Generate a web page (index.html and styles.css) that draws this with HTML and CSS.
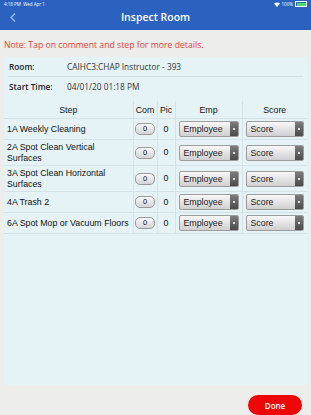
FILE: index.html
```html
<!DOCTYPE html>
<html>
<head>
	<meta charset="utf-8" />
	<title>Inspect Room</title>
	<link rel="stylesheet" href="styles.css">
</head>
<body>
	<div class="topbar">
		<div class="status">
			<span>4:18 PM&nbsp;&nbsp;Wed Apr 1</span>
			<span class="status-right">
				<svg width="6" height="5" viewBox="0 0 6 5"><path d="M0 1.5 Q3 -0.5 6 1.5 L3 5 Z" fill="#fff"/></svg>
				100%
				<span class="battery"><span class="battery-fill"></span></span>
			</span>
		</div>
		<div class="navbar">
			<svg class="back" width="6" height="9" viewBox="0 0 6 9"><path d="M5 0.5 L1 4.5 L5 8.5" stroke="#9fc0ee" stroke-width="1.2" fill="none"/></svg>
			<span class="title">Inspect Room</span>
		</div>
	</div>

	<div class="note">Note: Tap on comment and step for more details.</div>

	<div class="panel">
		<div class="info-row line">
			<span class="info-label">Room:</span>
			<span class="info-value">CAIHC3:CHAP Instructor - 393</span>
		</div>
		<div class="info-row">
			<span class="info-label">Start Time:</span>
			<span class="info-value">04/01/20 01:18 PM</span>
		</div>

		<table class="steps">
			<colgroup>
				<col class="c-step">
				<col class="c-com">
				<col class="c-pic">
				<col class="c-emp">
				<col>
			</colgroup>
			<tr>
				<th>Step</th>
				<th>Com</th>
				<th>Pic</th>
				<th>Emp</th>
				<th>Score</th>
			</tr>
			<tr>
				<td>1A Weekly Cleaning</td>
				<td class="mid"><span class="pill">0</span></td>
				<td class="mid">0</td>
				<td><span class="sel">Employee<i></i></span></td>
				<td><span class="sel">Score<i></i></span></td>
			</tr>
			<tr>
				<td>2A Spot Clean Vertical<br>Surfaces</td>
				<td class="mid"><span class="pill">0</span></td>
				<td class="mid">0</td>
				<td><span class="sel">Employee<i></i></span></td>
				<td><span class="sel">Score<i></i></span></td>
			</tr>
			<tr>
				<td>3A Spot Clean Horizontal<br>Surfaces</td>
				<td class="mid"><span class="pill">0</span></td>
				<td class="mid">0</td>
				<td><span class="sel">Employee<i></i></span></td>
				<td><span class="sel">Score<i></i></span></td>
			</tr>
			<tr>
				<td>4A Trash 2</td>
				<td class="mid"><span class="pill">0</span></td>
				<td class="mid">0</td>
				<td><span class="sel">Employee<i></i></span></td>
				<td><span class="sel">Score<i></i></span></td>
			</tr>
			<tr>
				<td class="nowrap">6A Spot Mop or Vacuum Floors</td>
				<td class="mid"><span class="pill">0</span></td>
				<td class="mid">0</td>
				<td><span class="sel">Employee<i></i></span></td>
				<td><span class="sel">Score<i></i></span></td>
			</tr>
		</table>
	</div>

	<div class="footer">
		<button class="done">Done</button>
	</div>
</body>
</html>
```

FILE: styles.css
```css
body {
	margin: 0;
	background-color: #ededeb;
	font-family: "Open Sans", "Liberation Sans", sans-serif;
	color: #222;
}

.topbar {
	background-color: #2b62c0;
	height: 30px;
}

.status {
	display: flex;
	justify-content: space-between;
	align-items: center;
	height: 8px;
	padding: 0 4px;
	font-size: 4.5px;
	color: #fff;
}

.status-right {
	display: flex;
	align-items: center;
	gap: 2px;
}

.battery {
	display: inline-block;
	width: 9px;
	height: 3px;
	border: 0.5px solid #fff;
	padding: 0.5px;
}

.battery-fill {
	display: block;
	height: 100%;
	background-color: #4cd964;
}

.navbar {
	position: relative;
	display: flex;
	justify-content: center;
	align-items: center;
	height: 20px;
}

.back {
	position: absolute;
	left: 10px;
	top: 5px;
}

.title {
	color: #fff;
	font-size: 10.5px;
	font-weight: 600;
	margin-top: -2px;
}

.note {
	color: #e8413a;
	font-size: 8.7px;
	padding: 9px 4px 0;
	height: 16px;
}

.panel {
	margin: 0 4px;
	height: 328px;
	background-color: #e5f3f7;
	border-radius: 3px;
}

.info-row {
	display: flex;
	align-items: center;
	height: 19px;
	margin: 0 4px;
	font-size: 8.3px;
}

.info-row.line {
	border-bottom: 1px solid #d3dfe2;
	margin-top: 2px;
}

.info-label {
	width: 58px;
	font-weight: 600;
	padding-left: 1px;
}

.info-value {
	color: #333;
}

.steps {
	width: 100%;
	margin-top: 5px;
	border-collapse: collapse;
	table-layout: fixed;
	font-family: "Liberation Sans", Arial, sans-serif;
	font-size: 8.8px;
	color: #111;
}

.c-step { width: 129px; }
.c-com { width: 24px; }
.c-pic { width: 18px; }
.c-emp { width: 67px; }

.steps th {
	font-weight: normal;
	height: 17px;
	border: 1px solid #d4e3e8;
	border-top: none;
	padding: 0;
}

.steps td {
	border: 1px solid #d4e3e8;
	padding: 2px 3px;
	line-height: 10.5px;
}

.steps td.nowrap {
	white-space: nowrap;
}

.steps tr td:first-child,
.steps tr th:first-child {
	border-left: none;
}

.steps tr td:last-child,
.steps tr th:last-child {
	border-right: none;
}

.steps td.mid {
	text-align: center;
	padding: 0;
}

.pill {
	display: inline-block;
	width: 18px;
	height: 10px;
	line-height: 10px;
	border: 1px solid #9a9a9a;
	border-radius: 5px;
	background: linear-gradient(#fafafa, #d4d4d4);
	font-size: 7.5px;
	text-align: center;
}

.sel {
	position: relative;
	display: block;
	height: 14px;
	line-height: 14px;
	padding-left: 4px;
	border: 1px solid #9d9d9d;
	border-radius: 2px;
	background: linear-gradient(#f8f8f8, #cfcfcf);
	color: #222;
}

.sel i {
	position: absolute;
	right: 0;
	top: 0;
	width: 8px;
	height: 14px;
	background: linear-gradient(#7d7d7d, #4a4a4a);
	border-radius: 0 1px 1px 0;
}

.sel i::after {
	content: "";
	position: absolute;
	left: 3px;
	top: 6px;
	width: 2px;
	height: 2px;
	background-color: #ddd;
}

.footer {
	display: flex;
	justify-content: flex-end;
	padding: 10px 9px 0 0;
}

.done {
	width: 54px;
	height: 20px;
	border: none;
	border-radius: 10px;
	background-color: #ee0508;
	color: #fff;
	font-family: "Open Sans", "Liberation Sans", sans-serif;
	font-size: 8px;
	font-weight: 600;
}
```
